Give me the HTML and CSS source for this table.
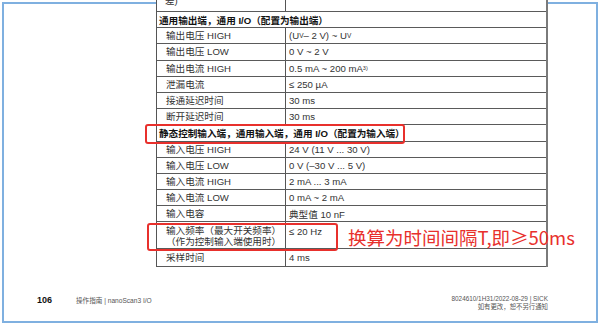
FILE: index.html
```html
<!DOCTYPE html>
<html lang="zh-CN">
<head>
<meta charset="utf-8">
<title>nanoScan3 I/O</title>
<link rel="stylesheet" href="styles.css">
</head>
<body>
<div class="page">
  <div class="spec">
    <div class="row first"><div class="c1">差)</div><div class="c2"></div></div>
    <div class="row head"><div class="span">通用输出端，通用 I/O（配置为输出端）</div></div>
    <div class="row"><div class="c1">输出电压 HIGH</div><div class="c2">(U<sub>V</sub> – 2 V) ~ U<sub>V</sub></div></div>
    <div class="row"><div class="c1">输出电压 LOW</div><div class="c2">0 V ~ 2 V</div></div>
    <div class="row"><div class="c1">输出电流 HIGH</div><div class="c2">0.5 mA ~ 200 mA <sup>3)</sup></div></div>
    <div class="row"><div class="c1">泄漏电流</div><div class="c2">≤ 250 µA</div></div>
    <div class="row"><div class="c1">接通延迟时间</div><div class="c2">30 ms</div></div>
    <div class="row"><div class="c1">断开延迟时间</div><div class="c2">30 ms</div></div>
    <div class="row head"><div class="span">静态控制输入端，通用输入端，通用 I/O（配置为输入端）</div></div>
    <div class="row"><div class="c1">输入电压 HIGH</div><div class="c2">24 V (11 V ... 30 V)</div></div>
    <div class="row"><div class="c1">输入电压 LOW</div><div class="c2">0 V (–30 V ... 5 V)</div></div>
    <div class="row"><div class="c1">输入电流 HIGH</div><div class="c2">2 mA ... 3 mA</div></div>
    <div class="row"><div class="c1">输入电流 LOW</div><div class="c2">0 mA ~ 2 mA</div></div>
    <div class="row"><div class="c1">输入电容</div><div class="c2">典型值 10 nF</div></div>
    <div class="row tall"><div class="c1">输入频率（最大开关频率）<br>（作为控制输入端使用时）</div><div class="c2">≤ 20 Hz</div></div>
    <div class="row last"><div class="c1">采样时间</div><div class="c2">4 ms</div></div>
  </div>
  <div class="footer">
    <div class="foot-left"><span class="pageno">106</span><span class="docname">操作指南 | nanoScan3 I/O</span></div>
    <div class="foot-right"><div>8024610/1H31/2022-08-29 | SICK</div><div>如有更改，恕不另行通知</div></div>
  </div>
  <div class="mark mark-head"></div>
  <div class="mark mark-freq"></div>
  <div class="note">换算为时间间隔T,即≥50ms</div>
</div>
</body>
</html>
```
FILE: styles.css
```css
html, body {
  margin: 0;
  padding: 0;
  background: #ffffff;
}
body {
  width: 600px;
  height: 324px;
  overflow: hidden;
  font-family: "Liberation Sans", "Noto Sans CJK SC", sans-serif;
  color: #333;
}
.page {
  position: relative;
  box-sizing: border-box;
  width: 596px;
  height: 321px;
  margin: 2px 0 0 2px;
  border: 2px solid #7fb0e0;
  background: #fff;
  display: flex;
  flex-direction: column;
}
.spec {
  margin: -9px 0 0 152px;
  width: 392px;
  background: #fff;
  border-left: 1px solid #555;
  border-right: 2px solid #7a7a7a;
  box-sizing: border-box;
  font-size: 9.6px;
}
.row {
  display: flex;
  box-sizing: border-box;
  height: 16.2px;
  border-bottom: 1px solid #5a5a5a;
}
.row.first { height: 17px; }
.row.tall { height: 27px; }
.row.last { height: 17.5px; }
.c1 {
  box-sizing: border-box;
  width: 129px;
  border-right: 1px solid #555;
  padding-left: 9px;
  display: flex;
  align-items: center;
  line-height: 11px;
}
.c2 {
  flex: 1;
  padding-left: 3px;
  display: flex;
  align-items: center;
  white-space: nowrap;
}
.row.first .c1 {
  padding-left: 8px;
  align-items: flex-end;
  padding-bottom: 5px;
}
.row.tall .c1 { align-items: flex-start; padding-top: 3px; }
.row.tall .c2 { align-items: flex-start; padding-top: 4px; }
.span {
  padding-left: 2px;
  display: flex;
  align-items: center;
  font-weight: bold;
  color: #111;
  white-space: nowrap;
}
sub {
  font-size: 6.5px;
  vertical-align: -2px;
  line-height: 0;
}
sup {
  font-size: 5.5px;
  vertical-align: 3px;
  line-height: 0;
}
.footer {
  margin: auto 0 10px 0;
  width: 544px;
  display: flex;
  justify-content: space-between;
  align-items: flex-end;
  color: #555;
}
.foot-left {
  display: flex;
  align-items: baseline;
  margin-left: 33px;
  margin-bottom: 6px;
}
.pageno {
  font-weight: bold;
  font-size: 9px;
  color: #111;
  width: 39px;
}
.docname {
  font-size: 6.6px;
}
.foot-right {
  text-align: right;
  font-size: 6.4px;
  line-height: 8px;
}
.mark {
  position: absolute;
  box-sizing: border-box;
  border: 2px solid #e8302c;
  border-radius: 3px;
}
.mark-head {
  left: 141px;
  top: 120px;
  width: 260px;
  height: 20px;
}
.mark-freq {
  left: 143px;
  top: 219px;
  width: 191px;
  height: 28px;
}
.note {
  position: absolute;
  left: 344px;
  top: 221px;
  font-family: "Noto Sans CJK SC", sans-serif;
  font-size: 18.5px;
  line-height: 24px;
  color: #e8302c;
  white-space: nowrap;
}
```
